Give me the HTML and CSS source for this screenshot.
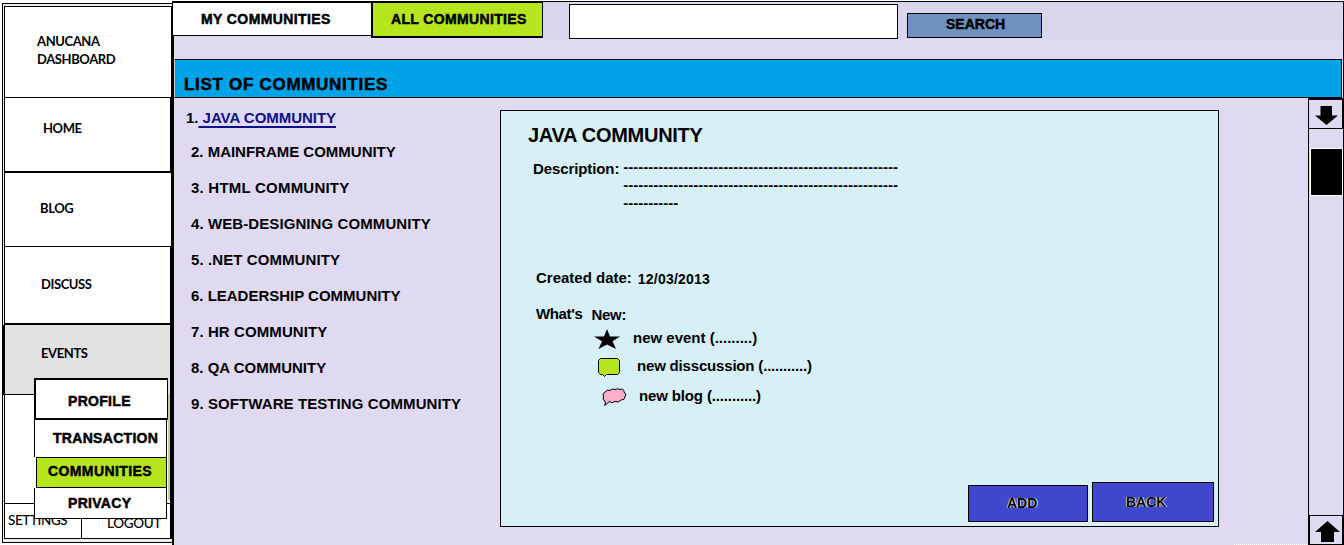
FILE: index.html
```html
<!DOCTYPE html>
<html lang="en">
<head>
<meta charset="utf-8">
<title>Communities</title>
<link rel="stylesheet" href="styles.css">
</head>
<body>
<div class="page">
  <aside class="sidebar">
    <nav class="nav">
      <div class="cell brand"><span>ANUCANA<br>DASHBOARD</span></div>
      <div class="cell home thick"><span>HOME</span></div>
      <div class="cell blog"><span>BLOG</span></div>
      <div class="cell discuss thick"><span>DISCUSS</span></div>
      <div class="cell events"><span>EVENTS</span></div>
      <div class="cell blank"></div>
      <div class="foot">
        <div class="settings"><span>SETTINGS</span></div>
        <div class="logout"><span>LOGOUT</span></div>
      </div>
    </nav>
    <div class="menu">
      <div class="item profile"><span>PROFILE</span></div>
      <div class="item transaction"><span>TRANSACTION</span></div>
      <div class="item communities"><span>COMMUNITIES</span></div>
      <div class="item privacy"><span>PRIVACY</span></div>
    </div>
  </aside>
  <main class="main">
    <header class="topbar">
      <div class="tab my"><span>MY COMMUNITIES</span></div>
      <div class="tab all"><span>ALL COMMUNITIES</span></div>
      <input class="query" type="text" aria-label="Search">
      <button class="search"><span>SEARCH</span></button>
    </header>
    <h1 class="title"><span>LIST OF COMMUNITIES</span></h1>
    <div class="content">
      <div class="list">
        <div class="first">1.<a>&nbsp;JAVA COMMUNITY</a></div>
        <div class="snug">2. MAINFRAME COMMUNITY</div>
        <div class="wide">3. HTML COMMUNITY</div>
        <div>4. WEB-DESIGNING COMMUNITY</div>
        <div>5. .NET COMMUNITY</div>
        <div class="snug">6. LEADERSHIP COMMUNITY</div>
        <div>7. HR COMMUNITY</div>
        <div class="snug">8. QA COMMUNITY</div>
        <div>9. SOFTWARE TESTING COMMUNITY</div>
      </div>
      <section class="panel">
        <h2>JAVA COMMUNITY</h2>
        <div class="desc">
          <span class="label">Description:</span>
          <div class="dashes">-------------------------------------------------------<br>-------------------------------------------------------<br>-----------</div>
        </div>
        <div class="created"><span class="label">Created date:</span><span class="date">12/03/2013</span></div>
        <div class="whats"><span class="label">What's</span><span class="new">New:</span></div>
        <div class="news event">
          <svg width="27" height="21" viewBox="0 0 27 21"><path d="M13 0 L16 7.5 H26 L18.5 12.2 L22 20 L13 15.6 L4.500 20 L8 12.200 L0 7.500 H10 Z"/></svg>
          <span>new event (.........)</span>
        </div>
        <div class="news talk">
          <svg width="23" height="20" viewBox="0 0 23 20"><path d="M2.500 .5 H19.500 L21.500 2.500 V14.500 L19.500 16.500 H8.500 L6.500 18.500 L4.500 16.500 H2.500 L.5 14.500 V2.500 Z" fill="#b5e61d" stroke="#000"/></svg>
          <span>new disscussion (...........)</span>
        </div>
        <div class="news post">
          <svg width="25" height="19" viewBox="0 0 25 19"><path d="M3 4 Q5 1 8 2.500 Q10 0 13 1.500 Q16 0 18 1.500 Q22 0 22 4 Q25 6 23 9 Q23 12 19 12 Q17 15 13 13.500 Q10 16 7 13.500 Q6 15.500 2.500 17.500 Q4 15 3 13 Q0 12 1.500 9 Q0 6 3 4 Z" fill="#ffaec9" stroke="#000"/></svg>
          <span>new blog (...........)</span>
        </div>
        <div class="actions">
          <button class="add"><span>ADD</span></button>
          <button class="back"><span>BACK</span></button>
        </div>
      </section>
      <div class="scrollbar">
        <div class="down"><svg width="23" height="19" viewBox="0 0 23 19"><path d="M5.500 0 H17 V9.500 H23 L11.500 19 L0 9.500 H5.500 Z"/></svg></div>
        <div class="thumb"></div>
        <div class="up"><svg width="25" height="21" viewBox="0 0 25 21"><path d="M12.500 0 L25 11 H19 V21 H6 V11 H0 Z"/></svg></div>
      </div>
    </div>
  </main>
</div>
</body>
</html>
```
FILE: styles.css
```css
* { box-sizing: border-box; }
body { margin: 0; background: #fff; overflow: hidden; font-family: "Liberation Sans", Arial, sans-serif; font-weight: bold; color: #000; }
.page { width: 1344px; height: 545px; display: flex; }
button, input { font: inherit; color: inherit; padding: 0; margin: 0; border-radius: 0; outline: none; }
svg { display: block; flex: none; }
span { white-space: nowrap; }

/* Sidebar */
.sidebar { position: relative; width: 172px; flex: none; padding: 3px 0 2px 2px; }
.nav { height: 540px; border: 1px solid #000; border-right: 0; padding: 2px 0 3px 1px; display: flex; flex-direction: column; background: #ececec; font: 700 13px/18px Lato, "Open Sans", sans-serif; letter-spacing: -.4px; }
.cell { background: #fff; border-left: 1px solid #000; border-right: 2px solid #000; border-bottom: 1px solid #000; display: flex; flex: none; }
.thick { border-bottom-width: 2px; }
.brand { height: 92px; border-top: 1px solid #000; border-right-width: 1px; padding: 25px 0 0 32px; }
.home { height: 75px; padding: 21px 0 0 38px; }
.blog { height: 74px; border-right-width: 1px; padding: 26px 0 0 35px; }
.discuss { height: 78px; padding: 28px 0 0 36px; }
.events { height: 70px; background: #e1e1e1; padding: 19px 0 0 36px; border-left-width: 3px; margin-left: -2px; }
.blank { height: 109px; }
.foot { flex: 1; display: flex; border: solid #000; border-width: 0 2px 1px 1px; background: #fff; font-weight: 500; font-size: 13.500px; }
.settings { width: 77px; border-right: 1px solid #000; padding: 7px 0 0 3px; }
.logout { padding: 10px 0 0 25px; letter-spacing: -.3px; }

/* Pop-up menu over the sidebar */
.menu { position: absolute; left: 34px; top: 378px; width: 136px; height: 142px; font-size: 14px; line-height: 18px; letter-spacing: .3px; -webkit-text-stroke: .5px #000; background: linear-gradient(#b9d393, #b9d393) 134px 16px / 2px 106px no-repeat; }
.item { background: #fff; width: 133px; border: solid #000; border-width: 0 1px 0 1px; }
.profile { width: 134px; height: 42px; border-width: 2px 1px 2px 2px; padding: 12px 0 0 32px; }
.transaction { height: 37px; padding: 9px 0 0 18px; }
.communities { width: 131px; height: 31px; margin-left: 2px; border-width: 1px; background: #b5e61d; padding: 4px 0 0 11px; letter-spacing: .4px; }
.privacy { height: 31px; border-bottom-width: 1px; padding: 6px 0 0 33px; }

/* Main area */
.main { width: 1172px; border-left: 2px solid #000; border-right: 1px solid #000; margin-top: 1px; background: #dfdaf1; display: flex; flex-direction: column; }
.topbar { height: 58px; border-top: 1px solid #000; display: flex; align-items: flex-start; font-size: 14px; line-height: 18px; -webkit-text-stroke: .5px #000; background: linear-gradient(#d9d5ed, #d9d5ed) 369px 0 / 800px 37px no-repeat; }
.tab { flex: none; letter-spacing: .4px; }
.my { width: 198px; height: 34px; margin-left: -1px; background: #fff; border: solid #000; border-width: 1px 0 1px 0; padding: 7px 0 0 28px; }
.all { width: 172px; height: 36px; background: #b5e61d; border: 2px solid #000; border-width: 1px 1px 2px 2px; padding: 7px 0 0 18px; letter-spacing: .35px; }
.query { width: 329px; height: 35px; margin: 2px 0 0 26px; border: 1px solid #000; background: #fff; }
.search { width: 135px; height: 25px; margin: 11px 0 0 9px; border: 1px solid #000; background: #7092be; text-align: left; padding: 0 0 4px 38px; line-height: 20px; -webkit-text-stroke: .5px #000; letter-spacing: 0; }
.title { margin: 0 1px 0 0; height: 39px; border: 1px solid #000; border-left-color: #ccc; background: #00a2e8; font-size: 17px; line-height: 20px; padding: 15px 0 0 9px; -webkit-text-stroke: .5px #000; letter-spacing: .7px; }
.content { flex: 1; display: flex; background: repeating-linear-gradient(90deg, #fff 0 1px, transparent 1px 2px) 1060px 100% / 74px 1px no-repeat; }
.list { width: 326px; flex: none; padding: 11px 0 0 17px; font-size: 15px; line-height: 18px; letter-spacing: .09px; display: flex; flex-direction: column; gap: 18px; white-space: nowrap; }
.first { margin: 0 0 -2px -5px; letter-spacing: -.03px; }
.snug { letter-spacing: -.01px; }
.wide { letter-spacing: .22px; }
.first a { color: #10108c; text-decoration: underline; text-decoration-thickness: 2px; text-underline-offset: 3px; }
.panel { width: 719px; height: 417px; flex: none; margin-top: 12px; border: 1px solid #000; background: #d7eff6; font-size: 15px; line-height: 18px; display: flex; flex-direction: column; }
.panel h2 { margin: 12px 0 0 27px; font-size: 20px; line-height: 24px; letter-spacing: -.28px; }
.desc { display: flex; margin: 13px 0 0 32px; height: 54px; gap: 4px; }
.desc .label { letter-spacing: -.1px; }
.dashes { line-height: 18px; margin-top: -2px; white-space: nowrap; }
.created { display: flex; margin: 55px 0 0 35px; gap: 6px; height: 20px; }
.date { margin-top: 1px; font-size: 14px; letter-spacing: .2px; }
.whats { display: flex; margin: 16px 0 0 35px; gap: 9px; height: 20px; }
.whats .label { letter-spacing: -.35px; }
.new { margin-top: 1px; letter-spacing: -.3px; }
.news { display: flex; align-items: flex-start; }
.event { margin: 3px 0 0 93px; height: 28px; gap: 12px; }
.talk { margin: 2px 0 0 97px; height: 29px; gap: 16px; letter-spacing: -.18px; }
.post { margin: 1px 0 0 101px; height: 20px; gap: 12px; letter-spacing: -.14px; }
.event span { margin-top: 1px; }
.talk span, .post span { margin-top: -1px; }
.event svg { margin-top: 1px; }
.actions { margin-top: auto; padding: 0 4px 4px 0; display: flex; justify-content: flex-end; align-items: flex-end; gap: 4px; }
.actions button { border: 1px solid #000; background: #3f48cc; text-align: left; font-size: 14px; line-height: 18px; text-shadow: -1px 0 #d9c9a8, 1px 0 #cbe3f3; }
.actions .add { width: 120px; height: 37px; padding: 0 0 2px 38px; }
.actions .back { width: 122px; height: 40px; padding: 0 0 0 33px; }

/* Scrollbar */
.scrollbar { width: 35px; margin-left: auto; border-left: 1px solid #000; display: flex; flex-direction: column; }
.down { height: 31px; border: solid #000; border-width: 2px 1px 1px 0; padding: 6px 0 0 6px; }
.thumb { height: 48px; margin: 19px 0 0 1px; border: 1px solid #fff; background: #000; }
.up { margin-top: auto; height: 30px; border: 1px solid #000; padding: 5px 0 0 5px; }
```
